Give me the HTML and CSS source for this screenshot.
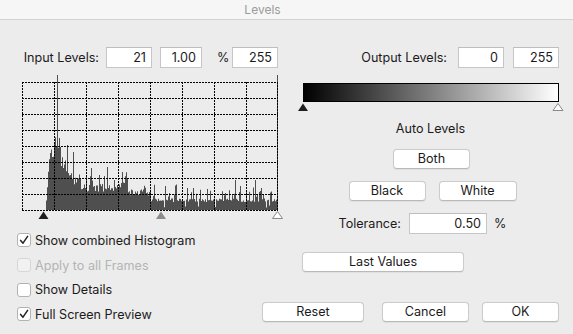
FILE: index.html
```html
<!DOCTYPE html>
<html>
<head>
<meta charset="utf-8">
<title>Levels</title>
<link rel="stylesheet" href="styles.css">
</head>
<body>
<div class="window">
  <div class="titlebar"><div class="title">Levels</div></div>
  <div class="content">
    <div class="col-left">
      <div class="levels-row">
        <span class="label">Input Levels:</span>
        <div class="field w46">21</div>
        <div class="field w42 gap8">1.00</div>
        <span class="pct">%</span>
        <div class="field w46">255</div>
      </div>
      <svg class="histogram" width="263" height="148" viewBox="17 72 263 148">
        <path id="hist" fill="#4f4f4f" d="M22 210 Z"/>
        <g stroke="#000" stroke-width="1" stroke-dasharray="2 1" shape-rendering="crispEdges" fill="none">
          <line x1="22" y1="82.5" x2="278" y2="82.5"/>
          <line x1="22" y1="98.5" x2="278" y2="98.5"/>
          <line x1="22" y1="114.5" x2="278" y2="114.5"/>
          <line x1="22" y1="130.5" x2="278" y2="130.5"/>
          <line x1="22" y1="146.5" x2="278" y2="146.5"/>
          <line x1="22" y1="162.5" x2="278" y2="162.5"/>
          <line x1="22" y1="178.5" x2="278" y2="178.5"/>
          <line x1="22" y1="194.5" x2="278" y2="194.5"/>
          <line x1="22" y1="210.5" x2="278" y2="210.5"/>
          <line x1="22.5" y1="82" x2="22.5" y2="211"/>
          <line x1="54.5" y1="82" x2="54.5" y2="211"/>
          <line x1="86.5" y1="82" x2="86.5" y2="211"/>
          <line x1="118.5" y1="82" x2="118.5" y2="211"/>
          <line x1="150.5" y1="82" x2="150.5" y2="211"/>
          <line x1="182.5" y1="82" x2="182.5" y2="211"/>
          <line x1="214.5" y1="82" x2="214.5" y2="211"/>
          <line x1="246.5" y1="82" x2="246.5" y2="211"/>
          <line x1="277.5" y1="82" x2="277.5" y2="211"/>
        </g>
        <polygon points="38.5,219 43.5,211.5 48.5,219" fill="#1e1e1e"/>
        <polygon points="156,219 161,211.5 166,219" fill="#8c8c8c"/>
        <polygon points="272.5,218.5 277.5,211.5 282.5,218.5" fill="#fff" stroke="#8a8a8a" stroke-width="1"/>
      </svg>
      <div class="checks">
        <div class="check">
          <span class="box"><svg width="14" height="14" viewBox="0 0 14 14"><path d="M3.6 7.4 L6 10.2 L10.6 3.4" fill="none" stroke="#222" stroke-width="1.5" stroke-linecap="round" stroke-linejoin="round"/></svg></span>
          <span>Show combined Histogram</span>
        </div>
        <div class="check disabled">
          <span class="box"></span>
          <span>Apply to all Frames</span>
        </div>
        <div class="check">
          <span class="box"></span>
          <span>Show Details</span>
        </div>
        <div class="check">
          <span class="box"><svg width="14" height="14" viewBox="0 0 14 14"><path d="M3.6 7.4 L6 10.2 L10.6 3.4" fill="none" stroke="#222" stroke-width="1.5" stroke-linecap="round" stroke-linejoin="round"/></svg></span>
          <span>Full Screen Preview</span>
        </div>
      </div>
    </div>
    <div class="col-right">
      <div class="levels-row out">
        <span class="label">Output Levels:</span>
        <div class="field w46">0</div>
        <div class="field w46 gap9">255</div>
      </div>
      <div class="gradient"></div>
      <svg class="out-tris" width="259" height="8" viewBox="300 103 259 8">
        <polygon points="298,111 303,103.5 308,111" fill="#1e1e1e"/>
        <polygon points="553,110.5 558,103.5 563,110.5" fill="#fff" stroke="#8a8a8a" stroke-width="1"/>
      </svg>
      <div class="auto-title">Auto Levels</div>
      <div class="btn-row">
        <div class="btn w77">Both</div>
      </div>
      <div class="btn-row gap13">
        <div class="btn w77">Black</div>
        <div class="btn w78">White</div>
      </div>
      <div class="tol-row">
        <span class="tol-label">Tolerance:</span>
        <div class="field w78">0.50</div>
        <span class="tol-pct">%</span>
      </div>
      <div class="btn last">Last Values</div>
      <div class="footer">
        <div class="btn w102">Reset</div>
        <div class="btn w87 ml18">Cancel</div>
        <div class="btn w77 ml13">OK</div>
      </div>
    </div>
  </div>
</div>
<script src="script.js"></script>
</body>
</html>
```

FILE: styles.css
```css
* { box-sizing: border-box; }
html, body { margin: 0; padding: 0; }
body {
  width: 573px;
  height: 334px;
  overflow: hidden;
  background: #ececec;
  font-family: Inter, "Noto Sans", "Liberation Sans", sans-serif;
  font-size: 12.6px;
  color: #1b1b1b;
}
.window { width: 573px; height: 334px; }
.titlebar {
  height: 20px;
  background: #f6f6f6;
  border-bottom: 1px solid #d2d2d2;
}
.title {
  width: 525px;
  text-align: center;
  line-height: 19px;
  color: #9b9b9b;
  font-size: 12px;
}
.content {
  display: flex;
  padding: 27px 0 0 17px;
}
.col-left { width: 263px; display: flex; flex-direction: column; }
.col-right { width: 259px; margin-left: 20px; display: flex; flex-direction: column; }

.levels-row {
  display: flex;
  align-items: center;
  justify-content: flex-end;
  height: 21px;
  padding-right: 2px;
}
.levels-row.out { padding-right: 0; }
.levels-row .label { margin-right: 7px; }
.levels-row.out .label { margin-right: 11px; }
.field {
  height: 21px;
  background: #fff;
  border: 1px solid #c6c6c6;
  border-top-color: #bdbdbd;
  text-align: right;
  padding-right: 5px;
  line-height: 19px;
}
.w46 { width: 46px; }
.w42 { width: 42px; }
.w78 { width: 78px; }
.gap8 { margin-left: 8px; }
.gap9 { margin-left: 9px; }
.pct { width: 30px; padding-left: 15px; }

.histogram { display: block; margin-top: 4px; overflow: visible; }

.checks { margin-top: 8px; display: flex; flex-direction: column; }
.check {
  height: 24.7px;
  display: flex;
  align-items: center;
}
.box {
  width: 14px;
  height: 14px;
  background: #fff;
  border: 1px solid #b2b2b2;
  border-radius: 3px;
  margin-right: 4px;
  display: flex;
  align-items: center;
  justify-content: center;
  overflow: hidden;
}
.box svg { display: block; flex: none; }
.check.disabled { color: #b4b4b4; }
.check.disabled .box { border-color: #d6d6d6; background: #f1f1f1; }

.gradient {
  margin-top: 15px;
  margin-left: 3px;
  width: 256px;
  height: 19px;
  border: 1px solid #000;
  background: linear-gradient(to right, #000 0%, #fff 100%);
}
.out-tris { display: block; margin-top: 1px; overflow: visible; }
.auto-title {
  margin-top: 10px;
  line-height: 16px;
  text-align: center;
  padding-left: 2px;
}
.btn-row {
  display: flex;
  justify-content: center;
  margin-top: 12px;
  padding-left: 4px;
}
.btn-row.gap13 { gap: 13px; padding-left: 6px; }
.btn {
  height: 20px;
  background: #fff;
  border: 1px solid #cbcbcb;
  border-bottom-color: #b9b9b9;
  border-radius: 4px;
  box-shadow: 0 0.5px 1px rgba(0,0,0,0.06);
  text-align: center;
  line-height: 18px;
  color: #1b1b1b;
}
.w77 { width: 77px; }
.w87 { width: 87px; }
.w102 { width: 102px; }
.ml18 { margin-left: 18px; }
.ml13 { margin-left: 13px; }

.tol-row {
  display: flex;
  align-items: center;
  margin-top: 12px;
  height: 21px;
}
.tol-label { width: 101px; text-align: right; margin-right: 8px; }
.tol-pct { margin-left: 7px; }

.btn.last { width: 162px; margin-top: 18px; margin-left: 2px; }

.footer {
  display: flex;
  margin-top: 30px;
  margin-left: -38px;
}
```

FILE: script.js
```js
(function () {
  var seed = 20240611;
  function rnd() {
    seed = (seed * 1103515245 + 12345) % 2147483648;
    return seed / 2147483648;
  }
  function base(x) {
    if (x < 46) return 0;
    if (x < 49) return (x - 45) * 12;
    if (x < 55) return 45 + (x - 49) * 5;
    if (x <= 60) return 72;
    if (x <= 63) return 52;
    if (x <= 68) return 40;
    if (x <= 80) return 34 - (x - 68) * 0.5;
    if (x <= 120) return 23;
    if (x <= 127) return 33;
    if (x <= 150) return 18;
    return 10;
  }
  var special = { 57: 135, 67: 65, 73: 58, 91: 42, 99: 35, 107: 43, 235: 30, 255: 30, 277: 135 };
  var d = 'M22 210';
  for (var x = 22; x < 278; x++) {
    var b = base(x), h;
    if (special[x]) {
      h = special[x];
    } else if (b === 0) {
      h = 0;
    } else {
      h = b * (0.8 + 0.35 * rnd());
      var r = rnd();
      if (x >= 150) {
        if (r < 0.28) h += 4 + 11 * rnd();
        else if (r > 0.95) h = 2 + 3 * rnd();
      } else if (x >= 62 && r < 0.2) {
        h += b * 0.45 * rnd() + 3;
      }
    }
    d += ' V' + (210 - h).toFixed(1) + ' H' + (x + 1);
  }
  d += ' V210 Z';
  document.getElementById('hist').setAttribute('d', d);
})();
```
